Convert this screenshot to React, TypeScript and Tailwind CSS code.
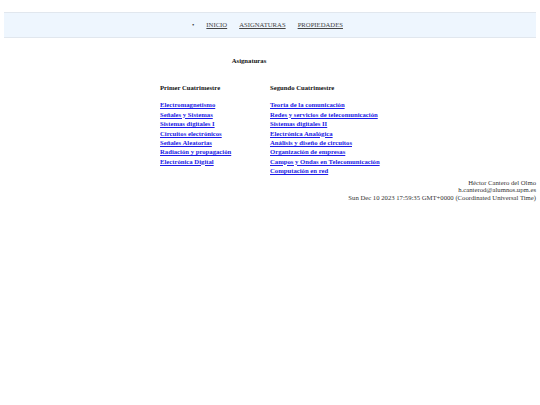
import React from "react";

const primer = [
  "Electromagnetismo",
  "Señales y Sistemas",
  "Sistemas digitales I",
  "Circuitos electrónicos",
  "Señales Aleatorias",
  "Radiación y propagación",
  "Electrónica Digital",
];

const segundo = [
  "Teoría de la comunicación",
  "Redes y servicios de telecomunicación",
  "Sistemas digitales II",
  "Electrónica Analógica",
  "Análisis y diseño de circuitos",
  "Organización de empresas",
  "Campos y Ondas en Telecomunicación",
  "Computación en red",
];

function Column({ title, items }: { title: string; items: string[] }) {
  return (
    <div className="flex flex-col">
      <div className="font-bold text-[#111] leading-[7.7px]">{title}</div>
      <ul className="mt-[9px] flex flex-col">
        {items.map((t) => (
          <li key={t} className="leading-[9.4px]">
            <a href="#" className="font-bold text-[#1a1ae6] underline">
              {t}
            </a>
          </li>
        ))}
      </ul>
    </div>
  );
}

export default function App() {
  return (
    <div className="w-[540px] h-[405px] bg-white text-black font-['Liberation_Serif',serif] text-[6.7px] leading-[7.7px]">
      <div className="pt-[12px] px-[4px]">
        <nav className="h-[26px] bg-[#eef6fe] border-y border-[#e1e7ee] flex items-center justify-center pr-[5px]">
          <span className="mr-[12px] text-[#333]">•</span>
          <div className="flex gap-[12px]">
            <a href="#" className="text-[#444] underline">INICIO</a>
            <a href="#" className="text-[#444] underline">ASIGNATURAS</a>
            <a href="#" className="text-[#444] underline">PROPIEDADES</a>
          </div>
        </nav>
      </div>
      <div className="ml-[160px] mt-[19px]">
        <div className="w-[178px] text-center font-bold text-[#111]">Asignaturas</div>
        <div className="flex mt-[19px]">
          <div className="w-[110px]">
            <Column title="Primer Cuatrimestre" items={primer} />
          </div>
          <Column title="Segundo Cuatrimestre" items={segundo} />
        </div>
      </div>
      <div className="mt-[3px] pr-[4px] text-right text-[#333]">
        <div>Héctor Cantero del Olmo</div>
        <div>h.canterod@alumnos.upm.es</div>
        <div>Sun Dec 10 2023 17:59:35 GMT+0000 (Coordinated Universal Time)</div>
      </div>
    </div>
  );
}
